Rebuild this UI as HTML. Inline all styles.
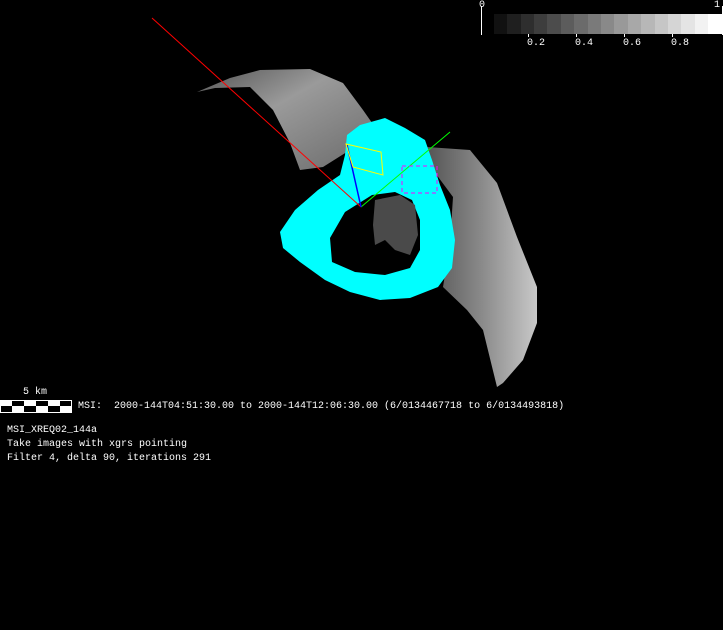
<!DOCTYPE html>
<html><head><style>
html,body{margin:0;padding:0;background:#000;}
body{width:723px;height:630px;position:relative;overflow:hidden;font-family:"Liberation Mono","DejaVu Sans Mono",monospace;font-size:10px;color:#fff;}
.t{position:absolute;white-space:pre;line-height:12px;}
</style></head><body>
<svg width="723" height="630" style="position:absolute;left:0;top:0">
<defs>
<linearGradient id="gw" x1="0" y1="0" x2="1" y2="1">
<stop offset="0" stop-color="#555"/><stop offset="0.4" stop-color="#9a9a9a"/><stop offset="1" stop-color="#6a6a6a"/>
</linearGradient>
<linearGradient id="gr" x1="1" y1="0" x2="0" y2="0">
<stop offset="0" stop-color="#c8c8c8"/><stop offset="0.5" stop-color="#8a8a8a"/><stop offset="1" stop-color="#555"/>
</linearGradient>
</defs>
<!-- upper wing -->
<path d="M197,92 L230,78 L260,70 L310,69 L343,83 L363,110 L377,130 L370,137 L350,150 L323,167 L300,170 L290,143 L273,110 L250,87 L215,88 Z" fill="url(#gw)"/>
<!-- right wing -->
<path d="M427,147 L470,150 L497,183 L517,237 L537,287 L537,323 L523,360 L503,383 L497,387 L483,330 L467,310 L443,287 L450,243 L453,197 L433,170 Z" fill="url(#gr)"/>
<!-- cyan body -->
<path fill-rule="evenodd" fill="#00ffff" d="M347,135 L360,125 L385,118 L405,128 L425,140 L432,160 L440,185 L450,210 L455,240 L452,268 L438,287 L410,298 L380,300 L350,292 L325,280 L300,262 L283,248 L280,232 L295,210 L318,190 L340,175 L345,155 Z
M345,212 L372,195 L395,192 L412,200 L420,220 L420,250 L410,268 L385,275 L355,272 L332,262 L330,238 Z"/>
<!-- gray inside hole -->
<path d="M375,200 L400,195 L415,205 L418,235 L410,255 L395,250 L385,240 L375,245 L373,225 Z" fill="#4a4a4a"/>
<!-- lines -->
<line x1="152" y1="18" x2="361" y2="207" stroke="#ff0000" stroke-width="1"/>
<line x1="361" y1="207" x2="450" y2="132" stroke="#00ff00" stroke-width="1"/>
<line x1="347" y1="145" x2="361" y2="207" stroke="#0000ff" stroke-width="1.5"/>
<path d="M346,144 L381,152 L383,175 L353,167 Z" fill="none" stroke="#ffff00" stroke-width="1"/>
<rect x="402" y="166" width="35" height="27" fill="none" stroke="#ff00ff" stroke-width="1" stroke-dasharray="4,3"/>
<!-- colorbar -->
<line x1="481.5" y1="6" x2="481.5" y2="35" stroke="#fff"/>
<g>
<rect x="494" y="14" width="14" height="20" fill="#111"/>
<rect x="507" y="14" width="14" height="20" fill="#1f1f1f"/>
<rect x="521" y="14" width="14" height="20" fill="#2e2e2e"/>
<rect x="534" y="14" width="14" height="20" fill="#3d3d3d"/>
<rect x="547" y="14" width="14" height="20" fill="#4c4c4c"/>
<rect x="561" y="14" width="14" height="20" fill="#5c5c5c"/>
<rect x="574" y="14" width="14" height="20" fill="#6b6b6b"/>
<rect x="588" y="14" width="14" height="20" fill="#7a7a7a"/>
<rect x="601" y="14" width="14" height="20" fill="#898989"/>
<rect x="614" y="14" width="14" height="20" fill="#999"/>
<rect x="628" y="14" width="14" height="20" fill="#a8a8a8"/>
<rect x="641" y="14" width="14" height="20" fill="#b7b7b7"/>
<rect x="655" y="14" width="14" height="20" fill="#c6c6c6"/>
<rect x="668" y="14" width="14" height="20" fill="#d5d5d5"/>
<rect x="681" y="14" width="14" height="20" fill="#e4e4e4"/>
<rect x="695" y="14" width="14" height="20" fill="#f2f2f2"/>
<rect x="708" y="14" width="14" height="20" fill="#fff"/>
</g>
<line x1="722.5" y1="6" x2="722.5" y2="35" stroke="#fff"/>
<g stroke="#fff"><line x1="528.5" y1="34" x2="528.5" y2="37"/><line x1="576.5" y1="34" x2="576.5" y2="37"/><line x1="624.5" y1="34" x2="624.5" y2="37"/><line x1="672.5" y1="34" x2="672.5" y2="37"/></g>
<!-- scale bar -->
<rect x="0.5" y="400.5" width="71" height="12" fill="#000" stroke="#fff"/>
<g fill="#fff">
<rect x="0" y="400" width="12" height="6"/><rect x="24" y="400" width="12" height="6"/><rect x="48" y="400" width="12" height="6"/>
<rect x="12" y="406" width="12" height="7"/><rect x="36" y="406" width="12" height="7"/><rect x="60" y="406" width="12" height="7"/>
</g>
</svg>
<div class="t" style="left:479px;top:0px">0</div>
<div class="t" style="left:714px;top:0px">1</div>
<div class="t" style="left:527px;top:38px">0.2</div>
<div class="t" style="left:575px;top:38px">0.4</div>
<div class="t" style="left:623px;top:38px">0.6</div>
<div class="t" style="left:671px;top:38px">0.8</div>
<div class="t" style="left:23px;top:387px">5 km</div>
<div class="t" style="left:78px;top:401px">MSI:  2000-144T04:51:30.00 to 2000-144T12:06:30.00 (6/0134467718 to 6/0134493818)</div>
<div class="t" style="left:7px;top:425px">MSI_XREQ02_144a</div>
<div class="t" style="left:7px;top:439px">Take images with xgrs pointing</div>
<div class="t" style="left:7px;top:453px">Filter 4, delta 90, iterations 291</div>
</body></html>
